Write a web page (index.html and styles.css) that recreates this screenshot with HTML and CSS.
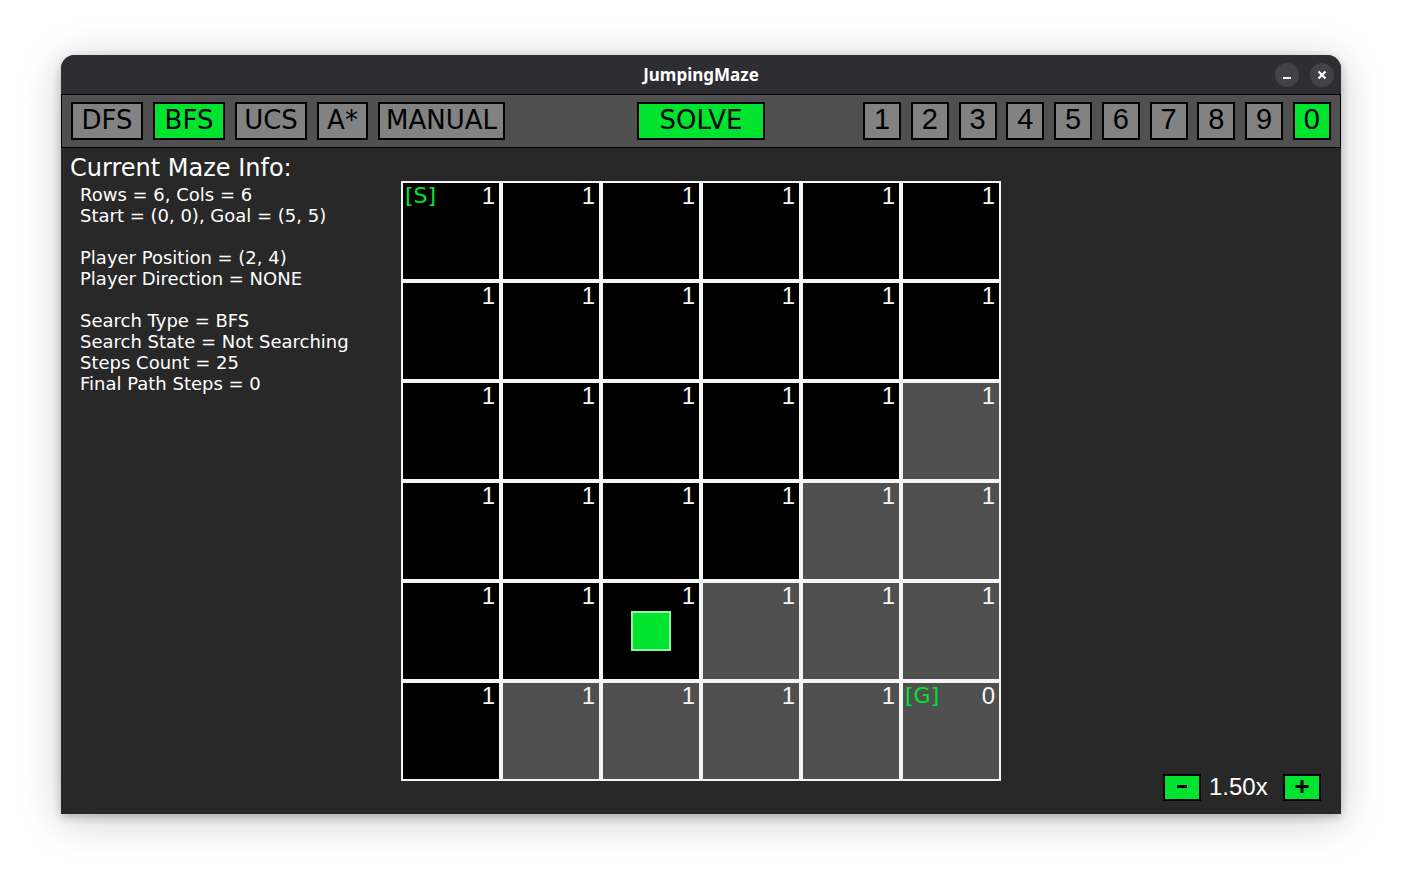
FILE: index.html
```html
<!DOCTYPE html>
<html lang="en">
<head>
<meta charset="utf-8">
<title>JumpingMaze</title>
<link rel="stylesheet" href="styles.css">
</head>
<body>
<div class="window">
  <header class="titlebar">
    <h1 class="title">JumpingMaze</h1>
    <div class="controls">
      <button class="control" type="button" aria-label="Minimize"><svg width="24" height="24" viewBox="0 0 24 24"><path d="M8 15h8" stroke="#fff" stroke-width="2"/></svg></button>
      <button class="control" type="button" aria-label="Close"><svg width="24" height="24" viewBox="0 0 24 24"><path d="M8.500 8.500l7 7M15.500 8.500l-7 7" stroke="#fff" stroke-width="2.200"/></svg></button>
    </div>
  </header>
  <nav class="toolbar">
    <div class="group">
      <button class="btn mode" type="button">DFS</button>
      <button class="btn mode active" type="button">BFS</button>
      <button class="btn mode" type="button">UCS</button>
      <button class="btn mode-short" type="button">A*</button>
      <button class="btn mode-long" type="button">MANUAL</button>
    </div>
    <button class="btn solve active" type="button">SOLVE</button>
    <div class="group levels">
      <button class="btn level" type="button">1</button>
      <button class="btn level" type="button">2</button>
      <button class="btn level" type="button">3</button>
      <button class="btn level" type="button">4</button>
      <button class="btn level" type="button">5</button>
      <button class="btn level" type="button">6</button>
      <button class="btn level" type="button">7</button>
      <button class="btn level" type="button">8</button>
      <button class="btn level" type="button">9</button>
      <button class="btn level active" type="button">0</button>
    </div>
  </nav>
  <main class="stage">
    <section class="info">
      <h2 class="info-title">Current Maze Info:</h2>
      <div class="info-body">
        <p>Rows = 6, Cols = 6<br>Start = (0, 0), Goal = (5, 5)</p>
        <p>Player Position = (2, 4)<br>Player Direction = NONE</p>
        <p>Search Type = BFS<br>Search State = Not Searching<br>Steps Count = 25<br>Final Path Steps = 0</p>
      </div>
    </section>
    <div class="maze">
      <div class="cell"><span class="tag">[S]</span>1</div><div class="cell">1</div><div class="cell">1</div><div class="cell">1</div><div class="cell">1</div><div class="cell">1</div>
      <div class="cell">1</div><div class="cell">1</div><div class="cell">1</div><div class="cell">1</div><div class="cell">1</div><div class="cell">1</div>
      <div class="cell">1</div><div class="cell">1</div><div class="cell">1</div><div class="cell">1</div><div class="cell">1</div><div class="cell open">1</div>
      <div class="cell">1</div><div class="cell">1</div><div class="cell">1</div><div class="cell">1</div><div class="cell open">1</div><div class="cell open">1</div>
      <div class="cell">1</div><div class="cell">1</div><div class="cell">1<span class="player"></span></div><div class="cell open">1</div><div class="cell open">1</div><div class="cell open">1</div>
      <div class="cell">1</div><div class="cell open">1</div><div class="cell open">1</div><div class="cell open">1</div><div class="cell open">1</div><div class="cell open"><span class="tag">[G]</span>0</div>
    </div>
    <div class="zoom">
      <button class="btn step active" type="button" aria-label="Zoom out"><svg width="14" height="14" viewBox="0 0 14 14"><path d="M2 6.500h10" stroke="#000" stroke-width="3"/></svg></button>
      <output class="zoom-value">1.50x</output>
      <button class="btn step active" type="button" aria-label="Zoom in"><svg width="14" height="14" viewBox="0 0 14 14"><path d="M.5 6.500h13M7 0v13" stroke="#000" stroke-width="3"/></svg></button>
    </div>
  </main>
</div>
</body>
</html>
```
FILE: styles.css
```css
* { box-sizing: border-box; }

body {
  margin: 0;
  padding: 55px 61px 67px;
  min-height: 100vh;
  display: flex;
  background: #fff;
  font-family: "DejaVu Sans", sans-serif;
}

.window {
  flex: 1;
  display: flex;
  flex-direction: column;
  border-radius: 14px 14px 0 0;
  overflow: hidden;
  background: #282828;
  box-shadow: 0 3px 10px rgba(0, 0, 0, .24), 0 6px 44px rgba(0, 0, 0, .2);
}

.titlebar {
  display: grid;
  grid-template-columns: 1fr auto 1fr;
  align-items: center;
  height: 39px;
  padding: 0 7px;
  background: #2e2d32;
}

.title {
  grid-column: 2;
  margin: 0;
  color: #fff;
  font: 700 17px/24px "Noto Sans", sans-serif;
}

.controls {
  display: flex;
  gap: 11px;
  justify-content: flex-end;
}

.control {
  width: 24px;
  height: 24px;
  padding: 0;
  border: 0;
  border-radius: 50%;
  background: #434247;
}

.control svg { display: block; }

.toolbar {
  display: grid;
  grid-template-columns: 1fr auto 1fr;
  align-items: center;
  height: 54px;
  padding: 0 9px;
  border: 1px solid #000;
  background: #505050;
}

.group {
  display: flex;
  gap: 10px;
}

.btn {
  height: 38px;
  padding: 0 0 2px;
  border: 2px solid #000;
  background: #828282;
  color: #000;
  font: 26px/30px "DejaVu Sans", sans-serif;
}

.mode { width: 72px; }

.mode-short { width: 51px; }

.mode-long { width: 127px; }

.solve { width: 128px; }

.active { background: #00e430; }

.levels {
  justify-self: end;
  gap: 0;
  width: 468px;
  justify-content: space-between;
}

.level {
  width: 38px;
  padding: 0 0 4px;
  font: 29px/30px "Liberation Sans", sans-serif;
}

.stage {
  flex: 1;
  display: grid;
  grid-template-columns: 1fr auto 1fr;
  color: #fff;
}

.info { padding: 7px 0 0 9px; }

.info-title {
  margin: 0;
  font-size: 24px;
  line-height: 26px;
  font-weight: 400;
}

.info-body {
  padding: 3px 0 0 10px;
  font-size: 18px;
  line-height: 21px;
  white-space: nowrap;
}

.info-body p { margin: 0 0 21px; }

.maze {
  align-self: center;
  display: grid;
  grid-template-columns: repeat(6, 100px);
  grid-auto-rows: 100px;
}

.cell {
  position: relative;
  display: flex;
  justify-content: flex-end;
  padding: 0 4px 0 2px;
  border: 2px solid #f5f5f5;
  background: #000;
  color: #f5f5f5;
  font: 24px/26px "Liberation Sans", sans-serif;
}

.open { background: #505050; }

.tag {
  margin-right: auto;
  color: #00e430;
  font: 22px/26px "DejaVu Sans", sans-serif;
}

.player {
  position: absolute;
  inset: 28px;
  border: 2px solid #90f4a8;
  background: #00e430;
}

.zoom {
  align-self: end;
  justify-self: end;
  display: flex;
  align-items: center;
  gap: 8px;
  padding: 0 20px 13px 0;
}

.step {
  display: grid;
  place-items: center;
  width: 38px;
  height: 27px;
  padding: 0 0 1px;
}

.zoom-value {
  min-width: 66px;
  padding-bottom: 2px;
  font: 24px/24px "Liberation Sans", sans-serif;
}
```
